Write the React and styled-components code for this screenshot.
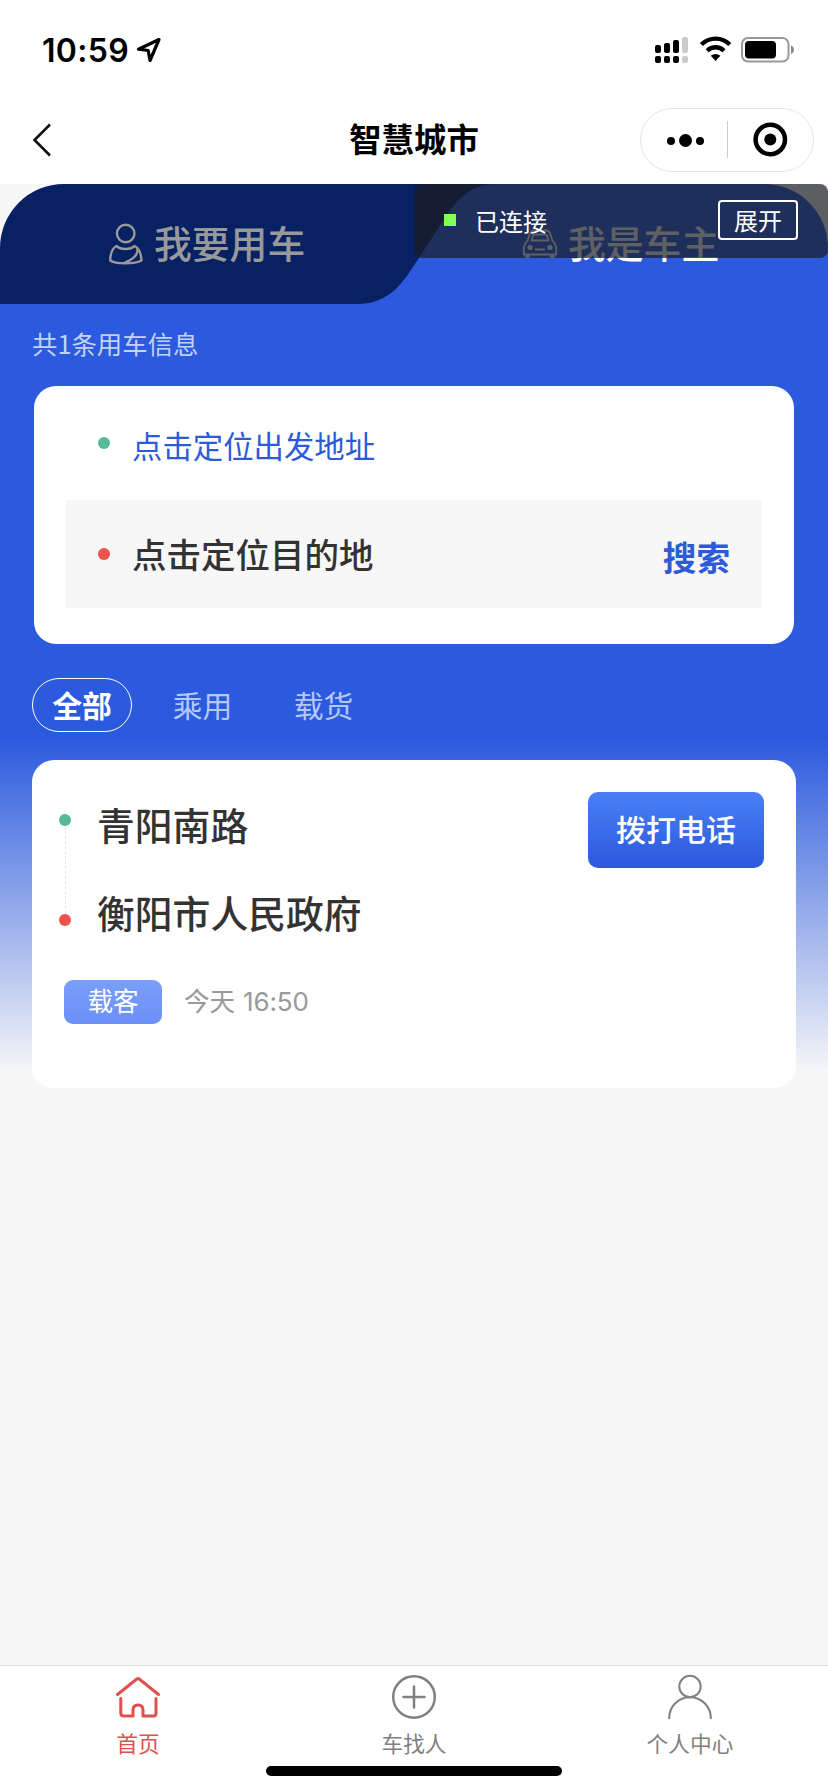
import React from 'react';
import styled, { createGlobalStyle } from 'styled-components';

const GlobalStyle = createGlobalStyle`
  * {
    box-sizing: border-box;
  }
  body {
    margin: 0;
    background: #f7f7f7;
    font-family: 'Noto Sans CJK SC', sans-serif;
  }
`;

const Page = styled.div`
  width: 828px;
  height: 1792px;
  display: flex;
  flex-direction: column;
  overflow: hidden;
  background: #f7f7f7;
`;

const StatusBar = styled.div`
  height: 96px;
  flex: none;
  padding: 4px 32px 0 42px;
  display: flex;
  align-items: center;
  background: #fff;
`;

const Clock = styled.span`
  width: 94px;
  font-family: Inter, sans-serif;
  font-size: 32px;
  font-weight: 600;
  letter-spacing: 0.3px;
  white-space: nowrap;
  color: #000;
`;

const StatusIcons = styled.div`
  margin-left: auto;
  display: flex;
  align-items: center;
`;

const NavBar = styled.header`
  height: 88px;
  flex: none;
  padding: 0 14px 0 32px;
  display: grid;
  grid-template-columns: 1fr auto 1fr;
  align-items: center;
  background: #fff;
`;

const Title = styled.h1`
  margin: -4px 9px 0 -9px;
  font-size: 32.4px;
  font-weight: 700;
  line-height: 48px;
  color: #000;
`;

const Capsule = styled.div`
  justify-self: end;
  width: 174px;
  height: 64px;
  border: 1px solid #e6e6e6;
  border-radius: 32px;
  display: flex;
  align-items: center;
`;

const Content = styled.main`
  position: relative;
  flex: 1;
  background: linear-gradient(#2b5adf 0, #2b5adf 554px, #f7f7f7 890px) no-repeat;
`;

const RoleTabs = styled.div`
  position: relative;
  height: 120px;
  display: flex;
  background: #f7f7f7;
`;

const TabShape = styled.svg`
  position: absolute;
  left: 0;
  top: 0;
`;

const RoleTab = styled.div`
  position: relative;
  width: 50%;
  display: flex;
  align-items: center;
  padding: 0 0 1px 108px;
  gap: 10px;
  font-size: 37.8px;
  font-weight: 500;
  line-height: 56px;
  color: ${(props) => (props.$active ? '#fff' : '#999')};

  span {
    margin-top: -3px;
  }
`;

const DebugPanel = styled.div`
  position: absolute;
  top: 0;
  right: 0;
  width: 414px;
  height: 74px;
  padding: 0 30px 2px;
  border-radius: 8px;
  display: flex;
  align-items: center;
  background: rgba(27, 29, 34, 0.7);
  color: #fff;
  font-size: 24px;
`;

const GreenLight = styled.span`
  width: 12px;
  height: 12px;
  margin-right: 19px;
  background: #80ff59;
`;

const ExpandButton = styled.button`
  width: 80px;
  height: 40px;
  margin: 0 0 0 auto;
  padding: 0 0 1px;
  border: 2px solid #fff;
  border-radius: 4px;
  background: none;
  color: #fff;
  font: inherit;
  line-height: 34px;
`;

const Count = styled.p`
  margin: 0;
  height: 82px;
  padding: 0 32px;
  font-size: 25.4px;
  line-height: 78px;
  color: #c3d2f8;
`;

const SearchCard = styled.section`
  height: 258px;
  margin: 0 34px;
  padding: 0 32px;
  border-radius: 22px;
  background: #fff;
`;

const SearchRow = styled.div`
  display: flex;
  align-items: center;
  height: ${(props) => (props.$filled ? '108px' : '114px')};
  padding: 0 32px;
  background: ${(props) => (props.$filled ? '#f7f7f7' : 'none')};
`;

const Dot = styled.span`
  flex: none;
  width: 12px;
  height: 12px;
  border-radius: 50%;
  background: ${(props) => props.$color};
`;

const Place = styled.span`
  margin-left: 22px;
  margin-top: ${(props) => (props.$blue ? '4px' : '-2px')};
  font-size: ${(props) => (props.$blue ? '30.4px' : '34.5px')};
  font-weight: ${(props) => (props.$blue ? 400 : 500)};
  line-height: 48px;
  color: ${(props) => (props.$blue ? '#2c5ad9' : '#333')};
`;

const SearchLink = styled.span`
  margin-left: auto;
  margin-top: 5px;
  font-size: 33.6px;
  font-weight: 700;
  line-height: 48px;
  color: #2c5ad9;
`;

const Filters = styled.div`
  height: 116px;
  padding: 34px 32px 0;
  display: flex;
`;

const Filter = styled.span`
  height: 54px;
  width: ${(props) => (props.$active ? '100px' : '121px')};
  border: 1px solid ${(props) => (props.$active ? '#fff' : 'transparent')};
  border-radius: 27px;
  text-align: center;
  font-size: 29.8px;
  font-weight: ${(props) => (props.$active ? 700 : 400)};
  line-height: 50px;
  color: ${(props) => (props.$active ? '#fff' : '#b5c8fa')};

  &:nth-child(2) {
    margin-left: 10px;
  }
`;

const TripCard = styled.section`
  height: 328px;
  margin: 0 32px;
  padding: 32px 32px 0 27px;
  border-radius: 22px;
  background: #fff;
`;

const TripTop = styled.div`
  height: 188px;
  display: flex;
  align-items: flex-start;
`;

const Track = styled.div`
  width: 12px;
  height: 112px;
  margin: 22px 26px 0 0;
  display: flex;
  flex-direction: column;
  align-items: center;
`;

const Dashes = styled.span`
  flex: 1;
  border-left: 1px dashed #e9e9e9;
`;

const Stops = styled.div`
  flex: 1;
  padding-top: 4px;
`;

const Stop = styled.div`
  height: 88px;
  font-size: 37.8px;
  font-weight: 500;
  line-height: 56px;
  white-space: nowrap;
  color: #333;
`;

const CallButton = styled.button`
  width: 176px;
  height: 76px;
  padding: 0 0 4px;
  border: 0;
  border-radius: 10px;
  background: linear-gradient(#4a80f7, #2b58dc);
  color: #fff;
  font-family: inherit;
  font-size: 30px;
  font-weight: 500;
`;

const TripInfo = styled.div`
  display: flex;
  align-items: center;
  margin-left: 5px;
  font-size: 25.6px;
  color: #999;
`;

const Tag = styled.span`
  width: 98px;
  height: 44px;
  margin-right: 22px;
  border-radius: 9px;
  text-align: center;
  line-height: 40px;
  background: linear-gradient(#7a9ef9, #6b90f8);
  color: #fff;
`;

const Time = styled.span`
  line-height: 42px;
  margin-top: -3px;
  span {
    margin-left: 2px;
    font-family: Inter, sans-serif;
    font-size: 26px;
    letter-spacing: -0.1px;
  }
`;

const BottomBar = styled.footer`
  height: 127px;
  flex: none;
  border-top: 1px solid #dedede;
  background: #fff;
`;

const BottomTabs = styled.nav`
  height: 100px;
  display: grid;
  grid-template-columns: repeat(3, 1fr);
`;

const BottomTab = styled.div`
  display: flex;
  flex-direction: column;
  align-items: center;
  padding-top: 7px;
  font-size: 21.7px;
  line-height: 32px;
  color: ${(props) => (props.$active ? '#e0504f' : '#808080')};

  svg {
    margin-bottom: 6px;
  }
`;

const HomeIndicator = styled.div`
  width: 296px;
  height: 10px;
  margin: 0 auto;
  border-radius: 5px;
  background: #000;
`;

const LocationIcon = () => (
  <svg width="26" height="26" viewBox="0 0 26 26" fill="none" stroke="#000" strokeWidth="3.2" strokeLinejoin="round">
    <path d="M23 2.5 2.5 12.2 12.2 13.5 14 23.5Z" />
  </svg>
);

const StatusDrawing = () => (
  <svg width="142" height="30" viewBox="0 0 142 30">
    <rect x="1" y="10" width="6" height="8" rx="2" />
    <rect x="10" y="8" width="6" height="10" rx="2" />
    <rect x="19" y="5" width="6" height="13" rx="2" />
    <rect x="28" y="2" width="6" height="16" rx="2" fill="#ccc" />
    <rect x="1" y="21" width="6" height="7" rx="2" />
    <rect x="10" y="21" width="6" height="7" rx="2" />
    <rect x="19" y="21" width="6" height="7" rx="2" />
    <rect x="28" y="21" width="6" height="7" rx="2" fill="#ccc" />
    <path d="M47.4 9.5a20 20 0 0 1 28.4 0M53.2 15.7a12 12 0 0 1 16.8 0" fill="none" stroke="#000" strokeWidth="4.4" />
    <path d="M56.8 20.8a7.5 7.5 0 0 1 9.6 0L61.6 26Z" />
    <rect x="88" y="3" width="46.5" height="23.5" rx="6" fill="none" stroke="#999" strokeWidth="2" />
    <rect x="91" y="6" width="31" height="17.5" rx="4" />
    <path d="M137 10.5c4 1.5 4 7 0 8.5Z" fill="#888" />
  </svg>
);

const BackIcon = () => (
  <svg width="20" height="34" viewBox="0 0 20 34" fill="none" stroke="#111" strokeWidth="2.6">
    <path d="M18 1.5 2.5 17 18 32.5" />
  </svg>
);

const CapsuleIcons = () => (
  <svg width="172" height="62" viewBox="0 0 172 62">
    <circle cx="30" cy="32" r="4" />
    <circle cx="44.5" cy="31.5" r="6.5" />
    <circle cx="59" cy="32" r="4" />
    <path d="M86.5 12v37" stroke="#ccc" />
    <circle cx="129.3" cy="30.5" r="14.7" fill="none" stroke="#000" strokeWidth="4.5" />
    <circle cx="129.3" cy="30.5" r="6" />
  </svg>
);

const PassengerIcon = () => (
  <svg width="36" height="42" viewBox="0 0 36 42" fill="none" stroke="currentColor" strokeWidth="2.4" strokeLinecap="round" strokeLinejoin="round">
    <circle cx="17.7" cy="10.5" r="8.8" />
    <path d="M8.5 23C4.500 25 2.500 29 2.200 37.500 7 41 26 41.500 33.500 37.500 33 29 31 25 26.500 23 22 27 13 27 8.500 23Z" />
    <path d="M29.500 25.500C30.500 32 24.500 36.500 17 39.500" />
  </svg>
);

const CarIcon = () => (
  <svg width="36" height="30" viewBox="0 0 36 30" fill="none" stroke="currentColor" strokeWidth="1.8" strokeLinejoin="round">
    <path d="M5.500 11.500 8 4.500Q9 1.500 12 1.500H24Q27 1.500 28 4.500L30.500 11.500Q34.200 15.500 34.200 19.500V25.500H1.800V19.500Q1.800 15.500 5.500 11.500Z" />
    <path d="M9.500 11.500 11 6.500Q11.200 5.500 12.500 5.500H23.500Q24.800 5.500 25 6.500L26.500 11.500ZM13 20.500H23" />
    <circle cx="8" cy="18.500" r="1.700" fill="currentColor" />
    <circle cx="28" cy="18.500" r="1.700" fill="currentColor" />
    <path d="M3.500 26.500Q5.500 28.500 7.500 26.500M28.500 26.500Q30.500 28.500 32.500 26.500" strokeWidth="3" />
  </svg>
);

const HomeIcon = () => (
  <svg width="48" height="48" viewBox="0 0 48 48" fill="none" stroke="currentColor" strokeWidth="3" strokeLinecap="round" strokeLinejoin="round">
    <path d="M3.500 21.500 22.800 6Q24 5 25.200 6L44.500 21.500" />
    <path d="M6.800 25.500V40Q6.800 43 9.800 43H19V37Q19 32 24 32T29 37V43H39.500Q42 43 42 40V25.500" />
  </svg>
);

const PlusIcon = () => (
  <svg width="48" height="48" viewBox="0 0 48 48" fill="none" stroke="currentColor" strokeWidth="2.5" strokeLinecap="round">
    <circle cx="24" cy="24" r="20.800" />
    <path d="M24 13.500V34.500M13.500 24H34.500" />
  </svg>
);

const UserIcon = () => (
  <svg width="48" height="48" viewBox="0 0 48 48" fill="none" stroke="currentColor" strokeWidth="2">
    <circle cx="24" cy="13.500" r="10.700" />
    <path d="M3.200 46V45A20.800 20.800 0 0 1 44.800 45V46" />
  </svg>
);

function App() {
  return (
    <Page>
      <GlobalStyle />
      <StatusBar>
        <Clock>10:59</Clock>
        <LocationIcon />
        <StatusIcons>
          <StatusDrawing />
        </StatusIcons>
      </StatusBar>

      <NavBar>
        <BackIcon />
        <Title>智慧城市</Title>
        <Capsule>
          <CapsuleIcons />
        </Capsule>
      </NavBar>

      <Content>
        <RoleTabs>
          <TabShape width="828" height="120" viewBox="0 0 828 120">
            <path fill="#2b5adf" d="M358 120V0H764A64 64 0 0 1 828 64V120Z" />
            <path fill="#082163" d="M0 120V64A64 64 0 0 1 64 0H496C470 0 457 15 443 37L413 83C399 105 384 120 358 120Z" />
          </TabShape>
          <RoleTab>
            <PassengerIcon />
            <span>我要用车</span>
          </RoleTab>
          <RoleTab $active>
            <CarIcon />
            <span>我是车主</span>
          </RoleTab>
        </RoleTabs>
        <DebugPanel>
          <GreenLight />
          已连接
          <ExpandButton>展开</ExpandButton>
        </DebugPanel>

        <Count>共1条用车信息</Count>

        <SearchCard>
          <SearchRow>
            <Dot $color="#56b997" />
            <Place $blue>点击定位出发地址</Place>
          </SearchRow>
          <SearchRow $filled>
            <Dot $color="#eb534c" />
            <Place>点击定位目的地</Place>
            <SearchLink>搜索</SearchLink>
          </SearchRow>
        </SearchCard>

        <Filters>
          <Filter $active>全部</Filter>
          <Filter>乘用</Filter>
          <Filter>载货</Filter>
        </Filters>

        <TripCard>
          <TripTop>
            <Track>
              <Dot $color="#56b997" />
              <Dashes />
              <Dot $color="#eb534c" />
            </Track>
            <Stops>
              <Stop>青阳南路</Stop>
              <Stop>衡阳市人民政府</Stop>
            </Stops>
            <CallButton>拨打电话</CallButton>
          </TripTop>
          <TripInfo>
            <Tag>载客</Tag>
            <Time>
              今天 <span>16:50</span>
            </Time>
          </TripInfo>
        </TripCard>
      </Content>

      <BottomBar>
        <BottomTabs>
          <BottomTab $active>
            <HomeIcon />
            首页
          </BottomTab>
          <BottomTab>
            <PlusIcon />
            车找人
          </BottomTab>
          <BottomTab>
            <UserIcon />
            个人中心
          </BottomTab>
        </BottomTabs>
        <HomeIndicator />
      </BottomBar>
    </Page>
  );
}

export default App;
